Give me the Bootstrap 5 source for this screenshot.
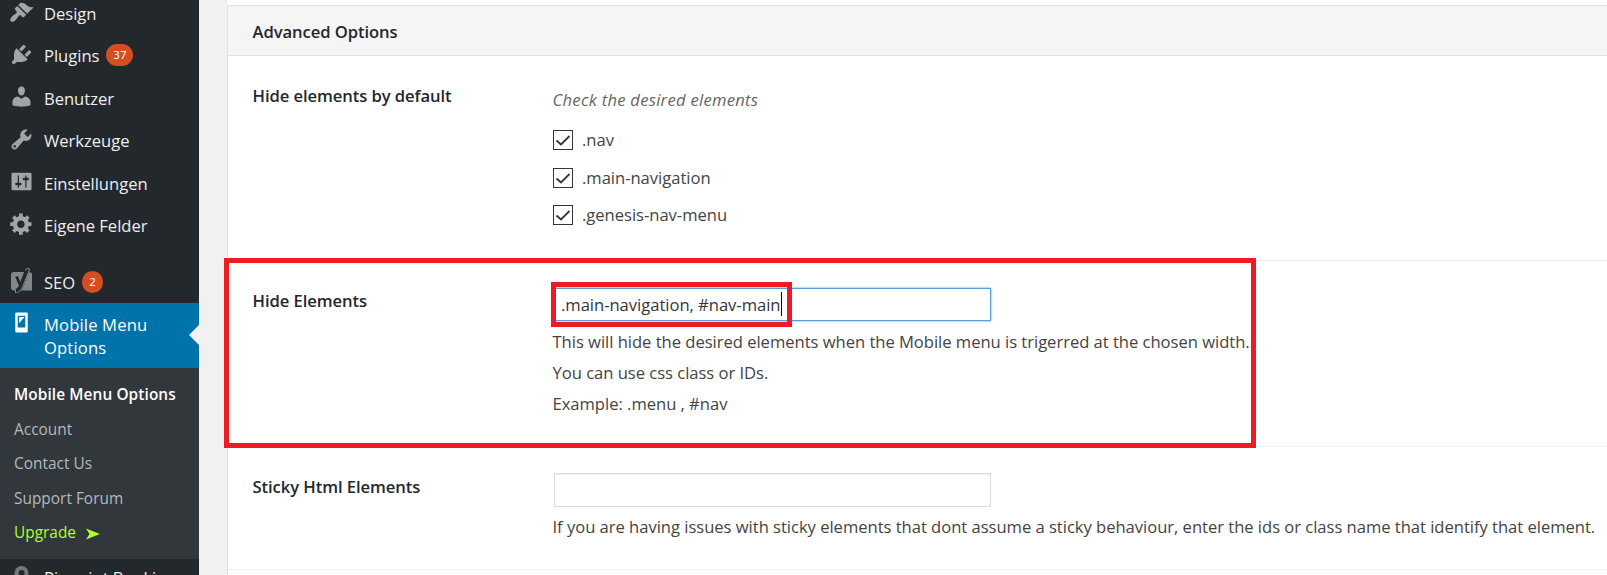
<!DOCTYPE html>
<html lang="de">
<head>
<meta charset="utf-8">
<title>Mobile Menu Options</title>
<link href="https://cdn.jsdelivr.net/npm/bootstrap@5.3.0/dist/css/bootstrap.min.css" rel="stylesheet">
<style>
body{font-family:"Open Sans","Noto Sans",sans-serif;font-size:16.6px;letter-spacing:-.03px;color:#444;background:#f1f1f1;height:575px;overflow:hidden}
.side{width:199px;height:575px;background:#23282d;color:#eee}
.side-in{margin-top:-8px}
.item{height:42.4px;padding:10px 8px 0 44px;line-height:23px;position:relative;white-space:nowrap}
.item>svg{position:absolute;left:9px;top:7.5px;width:25px;height:25px;fill:#a0a5aa}
.gap-above{margin-top:14.6px}
.count{background:#d54e21;color:#fff;font-size:11.5px;line-height:22px;height:22px;min-width:21px;border-radius:11px;letter-spacing:0;text-align:center;margin-left:7px;font-weight:400}
.current{height:65px;background:#0073aa;color:#fff;white-space:normal;margin-top:-.4px;letter-spacing:.15px}
.current>svg{fill:#fff}
.current::after{content:"";position:absolute;right:0;top:22px;border:10px solid transparent;border-left:0;border-right-color:#f1f1f1}
.sub{background:#32373c;height:191px;padding:10.5px 0 0 14px;font-size:15.4px;line-height:34.5px;letter-spacing:.02px;color:#b4b9be}
.sub .on{color:#fff;font-weight:600;letter-spacing:.1px}
.sub .up{color:#adff2f}
.cut{padding-top:7px}
.panel{margin-left:28px;border-left:1px solid #e1e1e1;background:#fff;height:570px;box-shadow:0 -5px #fff;margin-top:5px}
.band{height:51px;border-top:1px solid #e1e1e1;border-bottom:1px solid #e1e1e1;background:#f5f5f5;padding-left:24.5px}
.band.ttl{line-height:51px}
.ttl{color:#23282d;font-weight:600;line-height:24px;letter-spacing:-.07px}
.opt{border-bottom:1px solid #eee;padding-left:24.5px;position:relative}
.opt .ttl{width:300px;padding-top:28px}
.opt .fld{white-space:nowrap;line-height:31px}
.r1{height:205px}.r2{height:186px}.r3{height:123px}
.hint{font-style:italic;color:#666;line-height:24px;margin-top:31.5px;letter-spacing:.27px}
.chk{line-height:24px;height:24px;margin-left:.5px}
.tick{width:20px;height:20px;border:1px solid #32373c;margin-right:9px}
.inp{width:437px;height:34px;border:1px solid #ddd;box-shadow:inset 0 1px 2px rgba(0,0,0,.07);margin-left:1.5px}
.inp.act{height:33px;margin-top:27px;border-color:#5b9dd9;box-shadow:0 0 2px rgba(30,140,190,.8);line-height:31px;padding-left:6px;color:#32373c}
.caret{width:1px;height:24px;background:#000;margin-top:3px}
.hl{position:absolute;border:5px solid #ed1c24;pointer-events:none}
.hl-row{left:-4px;top:-3px;width:1032px;height:190px}
.hl-inp{left:-4px;top:-7px;width:241px;height:45px}
</style>
</head>
<body>
<div class="d-flex">
<nav class="side flex-shrink-0 overflow-hidden">
<div class="side-in">
<div class="item"><svg viewBox="0 0 20 20"><path d="M14.48 11.06L7.41 3.99l1.5-1.5c.5-.56 2.3-.47 3.51.32 1.21.8 1.43 1.28 2.91 2.1 1.18.64 2.45 1.26 4.45.85zm-.71.71L6.7 4.7 4.93 6.47c-.39.39-.39 1.02 0 1.41l1.06 1.06c.39.39.39 1.03 0 1.42-.6.6-1.43 1.11-2.21 1.69-.35.26-.7.53-1.01.84C1.43 14.23.4 16.08 1.4 17.07c.99 1 2.84-.03 4.18-1.36.31-.31.58-.66.85-1.02.57-.78 1.08-1.61 1.69-2.21.39-.39 1.02-.39 1.41 0l1.06 1.06c.39.39 1.02.39 1.41 0z"/></svg>Design</div>
<div class="item d-flex"><svg viewBox="0 0 20 20"><path d="M13.11 4.36L9.87 7.6 8 5.73l3.24-3.24c.35-.34 1.05-.2 1.56.32.52.51.66 1.21.31 1.55zm-8 1.77l.91-1.12 9.01 9.01-1.19.84c-.71.71-2.63 1.16-3.82 1.16H6.14L4.9 17.26c-.59.59-1.54.59-2.12 0-.59-.58-.59-1.53 0-2.12l1.24-1.24v-3.88c0-1.13.4-3.19 1.09-3.89zm7.26 3.97l3.24-3.24c.34-.35 1.04-.21 1.55.31.52.51.66 1.21.31 1.55l-3.24 3.25z"/></svg><span>Plugins</span><span class="count" style="width:27px">37</span></div>
<div class="item"><svg viewBox="0 0 20 20"><path d="M10 9.25c-2.27 0-2.73-3.44-2.73-3.44C7 4.02 7.82 2 9.97 2c2.16 0 2.98 2.02 2.71 3.81 0 0-.41 3.44-2.68 3.44zm0 2.57L12.72 10c2.39 0 4.52 2.33 4.52 4.53v2.49s-3.65 1.13-7.24 1.13c-3.65 0-7.24-1.13-7.24-1.13v-2.49c0-2.25 1.94-4.48 4.47-4.48z"/></svg>Benutzer</div>
<div class="item"><svg viewBox="0 0 20 20"><path d="M16.68 9.77c-1.34 1.34-3.3 1.67-4.95.99l-5.41 6.52c-.99.99-2.59.99-3.58 0s-.99-2.59 0-3.57l6.52-5.42c-.68-1.65-.35-3.61.99-4.95 1.28-1.28 3.12-1.62 4.72-1.06l-2.89 2.89 2.82 2.82 2.86-2.87c.53 1.58.18 3.39-1.08 4.65zM3.81 16.21c.4.39 1.04.39 1.43 0 .4-.4.4-1.04 0-1.43-.39-.4-1.03-.4-1.43 0-.39.39-.39 1.03 0 1.43z"/></svg>Werkzeuge</div>
<div class="item"><svg viewBox="0 0 20 20"><path d="M18 16V4c0-.55-.45-1-1-1H3c-.55 0-1 .45-1 1v12c0 .55.45 1 1 1h14c.55 0 1-.45 1-1zM8 11h1c.55 0 1 .45 1 1s-.45 1-1 1H8v1.5c0 .28-.22.5-.5.5s-.5-.22-.5-.5V13H6c-.55 0-1-.45-1-1s.45-1 1-1h1V5.500c0-.28.22-.5.5-.5s.5.22.5.5V11zm5-2h-1c-.55 0-1-.45-1-1s.45-1 1-1h1V5.500c0-.28.22-.5.5-.5s.5.22.5.5V7h1c.55 0 1 .45 1 1s-.45 1-1 1h-1v5.500c0 .28-.22.5-.5.5s-.5-.22-.5-.5V9z"/></svg>Einstellungen</div>
<div class="item"><svg viewBox="0 0 20 20"><path d="M18 12h-2.18c-.17.7-.44 1.35-.81 1.93l1.54 1.54-2.1 2.1-1.54-1.54c-.58.36-1.23.63-1.91.79V19H8v-2.18c-.68-.16-1.33-.43-1.91-.79l-1.54 1.54-2.12-2.12 1.54-1.54c-.36-.58-.63-1.23-.79-1.91H1V9.03h2.17c.16-.7.44-1.35.8-1.94L2.43 5.55l2.1-2.1 1.54 1.54c.58-.37 1.24-.64 1.93-.81V2h3v2.18c.68.16 1.33.43 1.91.79l1.54-1.54 2.12 2.12-1.54 1.54c.36.59.64 1.24.8 1.94H18V12zm-8.5 1.5c1.66 0 3-1.34 3-3s-1.34-3-3-3-3 1.34-3 3 1.34 3 3 3z"/></svg>Eigene Felder</div>
<div class="item gap-above d-flex"><svg viewBox="0 0 25 25"><path fill="#82878c" d="M5 4h14l4 1v17.500H5a3 3 0 0 1-3-3V7a3 3 0 0 1 3-3z"/><path fill="none" stroke="#23282d" stroke-width="4.600" d="M19 0L13 16Q10.500 23 6.500 23"/><path fill="none" stroke="#82878c" stroke-width="1" d="M16.500 2.500L17.300.800H20.800L14 18Q11 25 6.500 25V21.500"/><path fill="none" stroke="#23282d" stroke-width="2.800" d="M7.500 8.500L11.500 17.500"/></svg><span>SEO</span><span class="count">2</span></div>
<div class="item current"><svg viewBox="0 0 20 20"><path fill-rule="evenodd" d="M6 2h8c.55 0 1 .45 1 1v14c0 .55-.45 1-1 1H6c-.55 0-1-.45-1-1V3c0-.55.45-1 1-1zm7 12V4.500H7V14h6zM8 5.500h4.500L8 10.500z"/></svg>Mobile Menu Options</div>
<div class="sub">
<div class="on">Mobile Menu Options</div>
<div>Account</div>
<div>Contact Us</div>
<div>Support Forum</div>
<div class="up d-flex align-items-center">Upgrade<svg style="margin-left:9px" width="16" height="12" viewBox="0 0 16 12" fill="currentColor"><path d="M1 .500L15 6 1 11.500 4.500 6z"/></svg></div>
</div>
<div class="item cut"><svg viewBox="0 0 25 25"><circle cx="12.500" cy="7" r="5" fill="none" stroke="#777" stroke-width="4"/></svg>Pinpoint Booking</div>
</div>
</nav>
<main class="flex-grow-1">
<div class="panel">
<div class="band ttl">Advanced Options</div>
<div class="opt r1 d-flex">
<div class="ttl">Hide elements by default</div>
<div class="fld">
<div class="hint">Check the desired elements</div>
<div class="chk d-flex align-items-center" style="margin-top:16.5px"><span class="tick d-flex"><svg width="18" height="18" viewBox="0 0 18 18" fill="none" stroke="#32373c" stroke-width="1.800"><path d="M2.500 9.500L7 13.500 15.500 5"/></svg></span><span>.nav</span></div>
<div class="chk d-flex align-items-center" style="margin-top:14px"><span class="tick d-flex"><svg width="18" height="18" viewBox="0 0 18 18" fill="none" stroke="#32373c" stroke-width="1.800"><path d="M2.500 9.500L7 13.500 15.500 5"/></svg></span><span>.main-navigation</span></div>
<div class="chk d-flex align-items-center" style="margin-top:13px"><span class="tick d-flex"><svg width="18" height="18" viewBox="0 0 18 18" fill="none" stroke="#32373c" stroke-width="1.800"><path d="M2.500 9.500L7 13.500 15.500 5"/></svg></span><span>.genesis-nav-menu</span></div>
</div>
</div>
<div class="opt r2 d-flex">
<div class="ttl">Hide Elements</div>
<div class="fld">
<div class="inp act d-flex position-relative"><span>.main-navigation, #nav-main</span><i class="caret"></i><div class="hl hl-inp"></div></div>
<div style="margin-top:5px">This will hide the desired elements when the Mobile menu is trigerred at the chosen width.</div>
<div>You can use css class or IDs.</div>
<div>Example: .menu , #nav</div>
</div>
<div class="hl hl-row"></div>
</div>
<div class="opt r3 d-flex">
<div class="ttl">Sticky Html Elements</div>
<div class="fld">
<div class="inp" style="margin-top:26px"></div>
<div style="margin-top:4px">If you are having issues with sticky elements that dont assume a sticky behaviour, enter the ids or class name that identify that element.</div>
</div>
</div>
</div>
</main>
</div>
<script src="https://cdn.jsdelivr.net/npm/bootstrap@5.3.0/dist/js/bootstrap.bundle.min.js"></script>
</body>
</html>
